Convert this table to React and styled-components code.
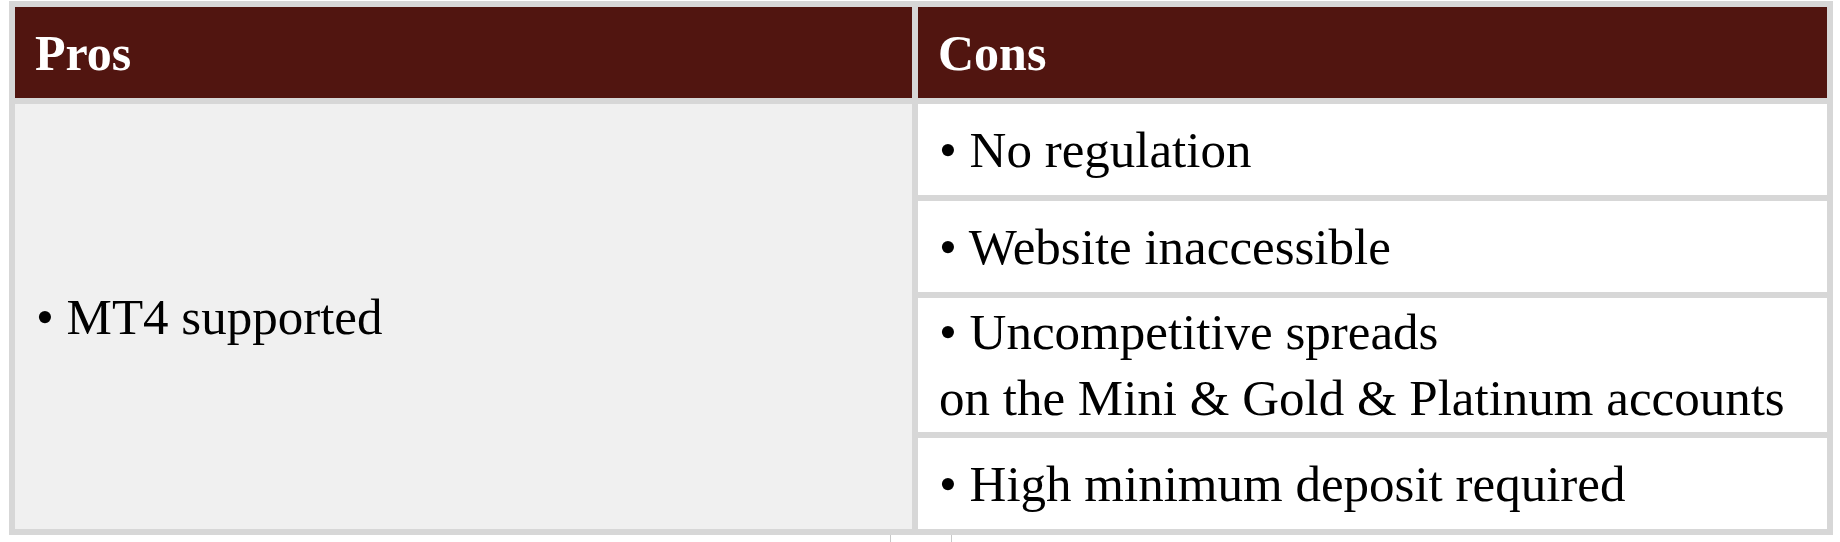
import styled, { createGlobalStyle } from "styled-components";

const GlobalStyle = createGlobalStyle`
	html, body {
		margin: 0;
		padding: 0;
		background: #ffffff;
	}
	body {
		font-family: "Liberation Serif", "Times New Roman", serif;
		color: #000;
	}
`;

const cons = [
	["• No regulation"],
	["• Website inaccessible"],
	["• Uncompetitive spreads", "on the Mini & Gold & Platinum accounts"],
	["• High minimum deposit required"],
];

function App() {
	return (
		<Page>
			<GlobalStyle />
			<Table>
				<thead>
					<tr>
						<HeadCell $width={897}>Pros</HeadCell>
						<HeadCell $width={909}>Cons</HeadCell>
					</tr>
				</thead>
				<tbody>
					{cons.map((lines, i) => (
						<tr key={i}>
							{i === 0 && (
								<ProCell rowSpan={cons.length}>• MT4 supported</ProCell>
							)}
							<ConCell $tall={lines.length > 1}>
								{lines.map((line, j) => (
									<span key={j}>
										{j > 0 && <br />}
										{line}
									</span>
								))}
							</ConCell>
						</tr>
					))}
				</tbody>
			</Table>
			<Stub />
		</Page>
	);
}
export default App;

const Page = styled.div`
	padding: 1px 0 0 9px;
`;

const Table = styled.table`
	width: 1824px;
	border-collapse: separate;
	border-spacing: 6px;
	background-color: #d7d7d7;
	table-layout: fixed;
`;

const HeadCell = styled.th`
	width: ${(p) => p.$width}px;
	height: 91px;
	padding: 0 20px;
	box-sizing: border-box;
	background-color: #511510;
	color: #ffffff;
	font-size: 50px;
	font-weight: 700;
	text-align: left;
	vertical-align: middle;
	line-height: 58px;
`;

const ProCell = styled.td`
	padding: 0 21px;
	background-color: #f0f0f0;
	font-size: 51px;
	line-height: 66px;
	vertical-align: middle;
`;

const ConCell = styled.td`
	height: ${(p) => (p.$tall ? 134 : 91)}px;
	padding: 0 21px;
	box-sizing: border-box;
	background-color: #ffffff;
	font-size: 51px;
	line-height: 66px;
	vertical-align: middle;
	white-space: nowrap;
`;

const Stub = styled.div`
	margin-left: 881px;
	width: 60px;
	height: 7px;
	border-left: 1px solid #c8c8c8;
	border-right: 1px solid #c8c8c8;
`;
